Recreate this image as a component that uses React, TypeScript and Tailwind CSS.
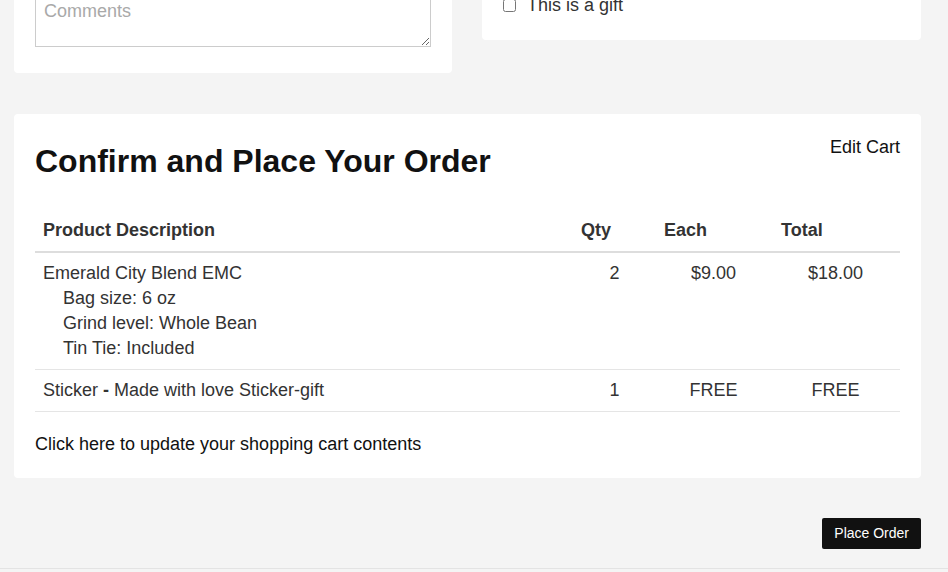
import React from "react";

type Line = { name: React.ReactNode; options?: string[]; qty: number; each: string; total: string };

const lines: Line[] = [
  {
    name: "Emerald City Blend EMC",
    options: ["Bag size: 6 oz", "Grind level: Whole Bean", "Tin Tie: Included"],
    qty: 2,
    each: "$9.00",
    total: "$18.00",
  },
  {
    name: (
      <>
        Sticker <span className="font-bold">-</span> Made with love Sticker-gift
      </>
    ),
    qty: 1,
    each: "FREE",
    total: "FREE",
  },
];

export default function App() {
  return (
    <div
      className="min-h-screen bg-[#f4f4f4] pl-[14px] pr-[27px] overflow-hidden text-[18px] text-[#333]"
      style={{ fontFamily: '"Liberation Sans", Arial, sans-serif' }}
    >
      {/* top row, scrolled partly out of view */}
      <div className="flex items-start gap-[30px] -mt-[40px]">
        <div className="w-[438px] bg-white rounded px-[21px] pt-[32px] pb-[26px]">
          <textarea
            placeholder="Comments"
            className="block w-full h-[55px] border border-[#ccc] px-[8px] py-[8px] text-[18px] leading-[21px] placeholder:text-[#a9a9a9] outline-none"
          />
        </div>
        <div className="flex-1 bg-white rounded px-[21px] pt-[32.5px] pb-[22.5px]">
          <label className="flex items-center gap-[11px] leading-[25px]">
            <input type="checkbox" className="w-[13px] h-[13px] m-0" />
            <span>This is a gift</span>
          </label>
        </div>
      </div>

      {/* confirm card */}
      <div className="mt-[41px] bg-white rounded px-[21px] pt-[21px] pb-[21px]">
        <div className="flex items-start justify-between">
          <h2 className="mt-[7px] text-[32px] leading-[38px] font-bold text-[#111]">
            Confirm and Place Your Order
          </h2>
          <a className="leading-[25px] text-[#111] cursor-pointer">Edit Cart</a>
        </div>

        <table className="mt-[30px] w-full table-fixed border-collapse leading-[25px]">
          <colgroup>
            <col className="w-[538px]" />
            <col className="w-[83px]" />
            <col className="w-[117px]" />
            <col className="w-[127px]" />
          </colgroup>
          <thead>
            <tr className="border-b-2 border-[#ddd]">
              <th className="px-[8px] py-[8px] text-left font-bold">Product Description</th>
              <th className="px-[8px] py-[8px] text-left font-bold">Qty</th>
              <th className="px-[8px] py-[8px] text-left font-bold">Each</th>
              <th className="px-[8px] py-[8px] text-left font-bold">Total</th>
            </tr>
          </thead>
          <tbody>
            {lines.map((line, i) => (
              <tr key={i} className="border-b border-[#e5e5e5] align-top">
                <td className="px-[8px] py-[8px]">
                  <div>{line.name}</div>
                  {line.options?.map((o) => (
                    <div key={o} className="pl-[20px]">
                      {o}
                    </div>
                  ))}
                </td>
                <td className="px-[8px] py-[8px] text-center">{line.qty}</td>
                <td className="pl-[7px] pr-[9px] py-[8px] text-center">{line.each}</td>
                <td className="pl-[7px] pr-[9px] py-[8px] text-center">{line.total}</td>
              </tr>
            ))}
          </tbody>
        </table>

        <a className="block mt-[19.5px] leading-[25px] text-[#111] cursor-pointer">
          Click here to update your shopping cart contents
        </a>
      </div>

      <div className="mt-[40px] flex justify-end">
        <button className="h-[31px] px-[12px] bg-[#111] text-white text-[14px] rounded-[2px]">
          Place Order
        </button>
      </div>

      <div className="mt-[19px] -ml-[14px] -mr-[27px] border-t border-[#e3e3e3] h-[20px]" />
    </div>
  );
}
